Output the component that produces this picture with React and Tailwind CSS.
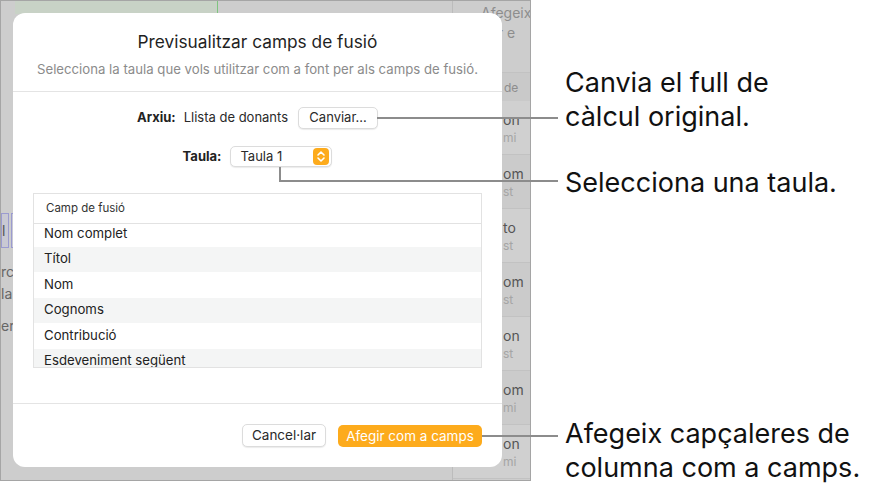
import React from 'react';

const rows = ['Nom complet', 'Títol', 'Nom', 'Cognoms', 'Contribució', 'Esdeveniment següent'];

const sideItems = [
  ['on', 'mi'],
  ['om', 'st'],
  ['to', 'st'],
  ['om', 'st'],
  ['on', 'st'],
  ['om', 'mi'],
  ['on', 'mi'],
];

function Stepper() {
  return (
    <svg width="16" height="17" viewBox="0 0 16 17">
      <rect x="0" y="0" width="16" height="17" rx="4" fill="#fdab1c" />
      <path d="M5 7 L8 4 L11 7" fill="none" stroke="#fff" strokeWidth="1.6" strokeLinecap="round" strokeLinejoin="round" />
      <path d="M5 10 L8 13 L11 10" fill="none" stroke="#fff" strokeWidth="1.6" strokeLinecap="round" strokeLinejoin="round" />
    </svg>
  );
}

export default function App() {
  return (
    <div className="relative flex w-[875px] h-[497px] bg-white overflow-hidden font-[Inter,sans-serif]">
      {/* app behind the dialog */}
      <div className="relative w-[531px] h-[481px] shrink-0 border border-[#a5a5a5] bg-[#cdcdcd] overflow-hidden">
        <div className="flex h-full">
          <div className="flex-1 flex flex-col">
            <div className="flex h-[13px]">
              <div className="w-[14px]" />
              <div className="w-[203px] bg-[#c8d2c6] border-r border-[#7fc47f]" />
            </div>
            <div className="mt-[199px] flex gap-[2px] h-[35px]">
              <div className="w-[8px] border border-[#9b9bd0] bg-[#c9c9d3] text-[14px] leading-[33px] text-[#555] overflow-hidden">l</div>
              <div className="w-[4px] border border-[#9b9bd0] bg-[#c9c9d3]" />
            </div>
            <div className="mt-[13px] text-[14px] leading-[22px] text-[#666]">
              <p>rc</p>
              <p>la</p>
              <p className="mt-[10px]">er</p>
            </div>
          </div>
          <div className="w-[78px] flex border-l border-[#bcbcbc]">
            <div className="flex-1 flex flex-col">
              <div className="h-[72px] pl-[28px] pt-[2px] text-[14px] leading-[20px] text-[#8d8d8d] border-b border-[#c2c2c2]">
                <p>Afegeix</p>
                <p>per e</p>
              </div>
              <div className="h-[28px] pl-[51px] pt-[6px] text-[12px] text-[#8d8d8d] bg-[#c9c9c9]">de</div>
              {sideItems.map(([a, b], i) => (
                <div key={i} className={`h-[54px] pl-[50px] pt-[9px] border-b border-[#c2c2c2] ${i % 2 ? 'bg-[#cbcbcb]' : 'bg-[#d0d0d0]'}`}>
                  <p className="text-[14px] leading-[20px] text-[#555]">{a}</p>
                  <p className="text-[12px] leading-[16px] text-[#a5a5a5]">{b}</p>
                </div>
              ))}
            </div>
            <div className="w-[11px] mt-[24px] bg-[#c3c3c3]" />
          </div>
        </div>

        {/* dialog */}
        <div className="absolute left-[12px] top-[12px] w-[489px] h-[454px] bg-white rounded-[12px] flex flex-col">
          <div className="pt-[18px] pb-[13px] text-center border-b border-[#e4e4e4]">
            <h1 className="text-[17.3px] leading-[22px] text-[#1f1f1f]">Previsualitzar camps de fusió</h1>
            <p className="mt-[7px] text-[13.2px] leading-[18px] text-[#8b8b8b]">
              Selecciona la taula que vols utilitzar com a font per als camps de fusió.
            </p>
          </div>

          <div className="flex-1 flex flex-col items-center pt-[15px] px-[20px]">
            <div className="flex items-center h-[22px] text-[13px] text-[#2a2a2a]">
              <span className="font-bold text-[#222]">Arxiu:</span>
              <span className="ml-[8px]">Llista de donants</span>
              <button className="ml-[10px] w-[80px] h-[22px] rounded-[5px] bg-white border border-[#dcdcdc] shadow-[0_1px_1px_rgba(0,0,0,0.08)] text-[13px] text-[#2a2a2a]">
                Canviar...
              </button>
            </div>
            <div className="mt-[17px] flex items-center h-[21px] text-[13px] text-[#2a2a2a]">
              <span className="font-bold text-[#222]">Taula:</span>
              <div className="ml-[9px] w-[102px] h-[21px] flex items-center justify-between pl-[9px] pr-[2px] rounded-[5px] bg-white border border-[#dcdcdc] shadow-[0_1px_1px_rgba(0,0,0,0.08)]">
                <span>Taula 1</span>
                <Stepper />
              </div>
            </div>

            <div className="mt-[26px] self-stretch h-[175px] border border-[#e2e2e2] flex flex-col">
              <div className="h-[30px] shrink-0 flex items-center pl-[12px] text-[11.5px] text-[#333] border-b border-[#e2e2e2]">
                Camp de fusió
              </div>
              <div className="flex-1 overflow-hidden">
                <div className="-mt-[3px]">
                  {rows.map((r, i) => (
                    <div key={r} className={`h-[25.5px] flex items-center pl-[10px] text-[13.2px] text-[#222] ${i % 2 ? 'bg-[#f4f5f5]' : 'bg-white'}`}>
                      {r}
                    </div>
                  ))}
                </div>
              </div>
            </div>
          </div>

          <div className="h-[64px] border-t border-[#e4e4e4] flex justify-end items-start gap-[12px] pt-[20px] pr-[20px]">
            <button className="w-[84px] h-[23px] rounded-[5px] bg-white border border-[#dcdcdc] shadow-[0_1px_1px_rgba(0,0,0,0.08)] text-[13.5px] text-[#2a2a2a]">
              Cancel·lar
            </button>
            <button className="mt-[1px] w-[144px] h-[22px] rounded-[5px] bg-[#fdab1c] text-[13.5px] text-white">
              Afegir com a camps
            </button>
          </div>
        </div>
      </div>

      {/* callout texts */}
      <div className="ml-[34px] flex flex-col text-[27px] leading-[34px] text-[#111]">
        <div className="mt-[66px]">
          <p>Canvia el full de</p>
          <p>càlcul original.</p>
        </div>
        <p className="mt-[32px]">Selecciona una taula.</p>
        <div className="mt-[217px]">
          <p>Afegeix capçaleres de</p>
          <p>columna com a camps.</p>
        </div>
      </div>

      {/* callout lines */}
      <div className="absolute left-[377px] top-[117px] w-[181px] h-[2px] bg-[#8c8c8c]" />
      <div className="absolute left-[279px] top-[167px] w-[2px] h-[15px] bg-[#8c8c8c]" />
      <div className="absolute left-[279px] top-[180px] w-[279px] h-[2px] bg-[#8c8c8c]" />
      <div className="absolute left-[482px] top-[435px] w-[76px] h-[2px] bg-[#8c8c8c]" />
    </div>
  );
}
